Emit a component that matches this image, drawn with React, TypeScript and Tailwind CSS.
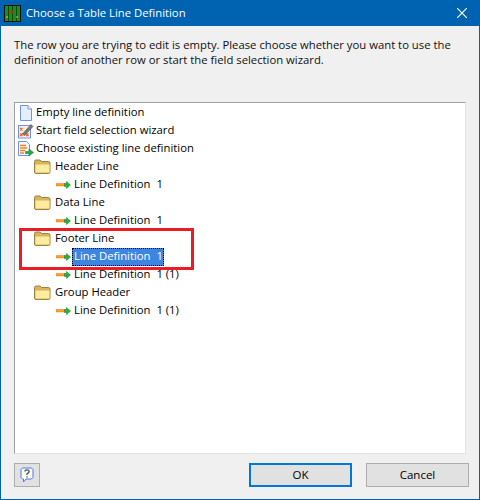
import React from "react";

const FileIcon = () => (
  <svg width="16" height="16" viewBox="0 0 16 16" className="shrink-0">
    <path d="M2.500 0.500h7.500l3.500 3.500v11.500h-11z" fill="#e6eefc" stroke="#6f93e6" />
    <path d="M10 0.500v3.500h3.500" fill="#fff" stroke="#6f93e6" />
  </svg>
);

const WizardIcon = () => (
  <svg width="16" height="16" viewBox="0 0 16 16" className="shrink-0">
    <rect x="0.500" y="2.500" width="12" height="12.500" fill="#f4eee0" stroke="#6f93e6" />
    <path d="M2 5l2.500 2.500M4.500 5L2 7.500M8 10.500l2.500 2.500M10.500 10.500L8 13M2 10.500L4.500 13M4.500 10.500L2 13" stroke="#ee6a20" strokeWidth="1.300" />
    <path d="M4.500 11L13 1.500 15 3.500 6.500 12.500z" fill="#7a7a7a" stroke="#4c4c4c" strokeWidth="0.600" />
  </svg>
);

const ExistingIcon = () => (
  <svg width="16" height="16" viewBox="0 0 16 16" className="shrink-0">
    <path d="M0.500 0.500h8l3 3v11h-11z" fill="#f2f5fd" stroke="#6f93e6" />
    <path d="M2 4.500h6M2 7h7M2 9.500h5M2 12h4" stroke="#f0891c" strokeWidth="1.400" />
    <path d="M7.500 10.500h3.500V8l4.500 3.500-4.500 3.500v-2.500H7.500z" fill="#1fae3c" stroke="#0e7a26" strokeWidth="0.500" />
  </svg>
);

const FolderIcon = () => (
  <svg width="17" height="15" viewBox="0 0 17 15" className="shrink-0">
    <path d="M0.500 13V2.500q0-1.500 1.500-1.500h4l1.500 1.500h7q1.500 0 1.500 1.500V13q0 1.500-1.500 1.500H2q-1.500 0-1.500-1.500z" fill="#d9b45c" stroke="#9c8344" />
    <path d="M1.500 5.500h14V13q0 .5-.5.5H2q-.5 0-.5-.5z" fill="#fbeca0" />
  </svg>
);

const ArrowIcon = () => (
  <svg width="15" height="8" viewBox="0 0 15 8" className="shrink-0">
    <rect x="0" y="2.500" width="9" height="2.500" fill="#f7a030" stroke="#ea7f18" strokeWidth="0.500" />
    <path d="M8.500 2.500h2V0.500L14.500 4l-4 3.500V5.500h-2z" fill="#22b33c" stroke="#0e7a26" strokeWidth="0.500" />
  </svg>
);

const TopRow = ({ icon, label }: { icon: React.ReactNode; label: string }) => (
  <div className="flex h-[18px] items-center gap-[2px] pl-[3px]">
    {icon}
    <span>{label}</span>
  </div>
);

const FolderRow = ({ label }: { label: string }) => (
  <div className="flex h-[18px] items-center gap-[4px] pl-[19px]">
    <FolderIcon />
    <span>{label}</span>
  </div>
);

const LeafRow = ({ label, selected }: { label: string; selected?: boolean }) => (
  <div className="flex h-[18px] items-center gap-[1px] pl-[41px] whitespace-pre">
    <ArrowIcon />
    {selected ? (
      <span className="flex h-[18px] w-[92px] items-center border border-dotted border-black bg-[#3d86e0] pl-[1px] text-white">
        {label}
      </span>
    ) : (
      <span className="pl-[2px]">{label}</span>
    )}
  </div>
);

export default function App() {
  return (
    <div className="flex h-[500px] w-[480px] flex-col overflow-hidden border border-t-0 border-[#0063b1] bg-[#f0f0f0] font-['Open_Sans',sans-serif] text-[11.3px] text-black">
      <div className="flex h-[26px] shrink-0 items-center bg-[#0063b1] pl-[3px] pr-[10px] text-white">
        <svg width="17" height="17" viewBox="0 0 17 17" className="shrink-0">
          <rect width="17" height="17" fill="#111" />
          <rect x="1" y="1" width="15" height="15" fill="#1f8a1f" />
          <path d="M4.500 1v15M8.500 1v15M12.500 1v15" stroke="#0b4d0b" />
          <path d="M6 7h4" stroke="#c22" strokeWidth="2" />
          <path d="M2 12h2M12 12h2" stroke="#dc3" />
        </svg>
        <span className="ml-[5px] text-[11.3px] leading-none">Choose a Table Line Definition</span>
        <svg width="10" height="10" viewBox="0 0 10 10" className="ml-auto mr-[2px]">
          <path d="M0 0l10 10M10 0L0 10" stroke="#fff" strokeWidth="1.200" />
        </svg>
      </div>

      <div className="flex min-h-0 flex-1 flex-col pb-[12px] pl-[13px] pr-[10px]">
        <p className="mt-[12px] h-[32px] w-[450px] leading-[14.500px] text-[#111]">
          The row you are trying to edit is empty. Please choose whether you want to use the definition of another row or start the field selection wizard.
        </p>

        <div className="relative mt-[32px] h-[353px] w-[452px] border border-b-[#e3e3e3] border-l-[#a0a0a0] border-r-[#e3e3e3] border-t-[#a0a0a0] bg-white pt-[1px]">
          <TopRow icon={<FileIcon />} label="Empty line definition" />
          <TopRow icon={<WizardIcon />} label="Start field selection wizard" />
          <TopRow icon={<ExistingIcon />} label="Choose existing line definition" />
          <FolderRow label="Header Line" />
          <LeafRow label="Line Definition  1" />
          <FolderRow label="Data Line" />
          <LeafRow label="Line Definition  1" />
          <FolderRow label="Footer Line" />
          <LeafRow label="Line Definition  1" selected />
          <LeafRow label="Line Definition  1 (1)" />
          <FolderRow label="Group Header" />
          <LeafRow label="Line Definition  1 (1)" />
          <div className="absolute left-[4px] top-[125px] h-[42px] w-[175px] border-[3px] border-[#ed1c24]" />
        </div>

        <div className="mt-[9px] flex items-start">
          <button className="flex h-[24px] w-[26px] shrink-0 items-center justify-center border border-[#adadad] bg-[#e1e1e1]">
            <svg width="14" height="17" viewBox="0 0 14 17">
              <path d="M2.500 1h9l1.500 1.500v8L11.500 12H6l-2.500 3v-3h-1L1 10.500v-8z" fill="#fbfbe6" stroke="#4a78f0" />
              <path d="M4.800 4.500Q5 2.800 7 2.800t2.200 1.700Q9.200 5.800 7 6.800v1.200M7 9.200v1.300" fill="none" stroke="#444a80" strokeWidth="1.300" />
            </svg>
          </button>
          <button className="ml-[209px] h-[24px] w-[103px] shrink-0 border-2 border-[#0078d7] bg-[#e1e1e1] text-[11.5px]">OK</button>
          <button className="ml-[14px] h-[24px] w-[103px] shrink-0 border border-[#adadad] bg-[#e1e1e1] text-[11.5px]">Cancel</button>
        </div>
      </div>
    </div>
  );
}
